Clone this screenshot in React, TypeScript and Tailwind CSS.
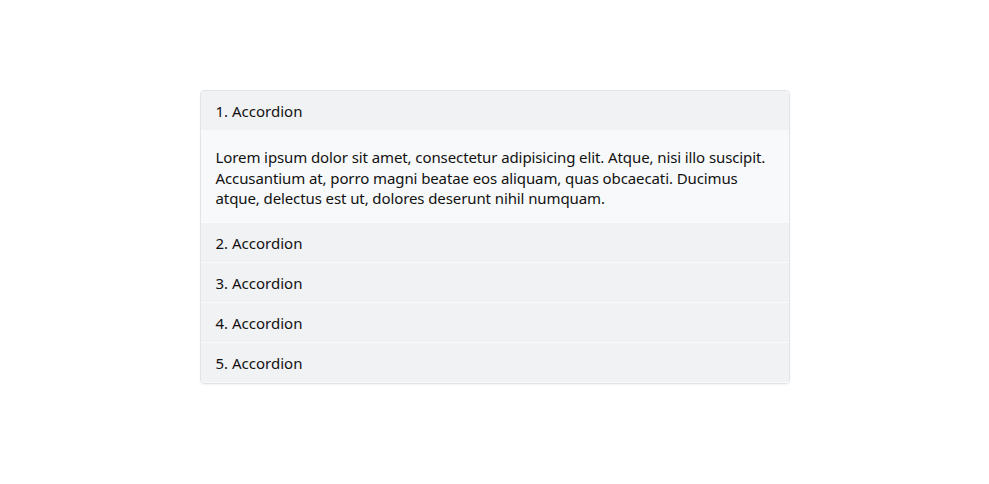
import React, { useState } from "react";

interface AccordionItem {
  title: string;
  lines: string[];
}

const items: AccordionItem[] = [
  {
    title: "1. Accordion",
    lines: [
      "Lorem ipsum dolor sit amet, consectetur adipisicing elit. Atque, nisi illo suscipit.",
      "Accusantium at, porro magni beatae eos aliquam, quas obcaecati. Ducimus",
      "atque, delectus est ut, dolores deserunt nihil numquam.",
    ],
  },
  { title: "2. Accordion", lines: ["Lorem ipsum dolor sit amet, consectetur adipisicing elit."] },
  { title: "3. Accordion", lines: ["Lorem ipsum dolor sit amet, consectetur adipisicing elit."] },
  { title: "4. Accordion", lines: ["Lorem ipsum dolor sit amet, consectetur adipisicing elit."] },
  { title: "5. Accordion", lines: ["Lorem ipsum dolor sit amet, consectetur adipisicing elit."] },
];

const App: React.FC = () => {
  const [open, setOpen] = useState<number>(0);

  return (
    <div
      className="min-h-[484px] bg-white pt-[90px] text-[#111]"
      style={{ fontFamily: '"Noto Sans", "Noto Sans CJK KR", sans-serif' }}
    >
      <div className="mx-auto w-[590px] overflow-hidden rounded-[4px] border border-[#e3e4e7] shadow-[0_1px_2px_rgba(0,0,0,0.05)]">
        {items.map((item, idx) => (
          <div
            key={idx}
            className={
              (idx > 0 ? "border-t border-[#fafafb] " : "") +
              (idx === items.length - 1 ? "border-b border-[#fafafb]" : "")
            }
          >
            <button
              type="button"
              onClick={() => setOpen(open === idx ? -1 : idx)}
              className="block h-[39px] w-full bg-[#f1f2f4] px-[15px] text-left text-[15px] leading-[40px]"
            >
              {item.title}
            </button>
            {open === idx && (
              <div className="whitespace-nowrap bg-[#f8f9fa] pl-[15px] pr-[8px] pt-[17px] pb-[13px] text-[15px] leading-[20.5px] tracking-[-0.1px]">
                {item.lines.map((line, i) => (
                  <div key={i}>{line}</div>
                ))}
              </div>
            )}
          </div>
        ))}
      </div>
    </div>
  );
};

export default App;
